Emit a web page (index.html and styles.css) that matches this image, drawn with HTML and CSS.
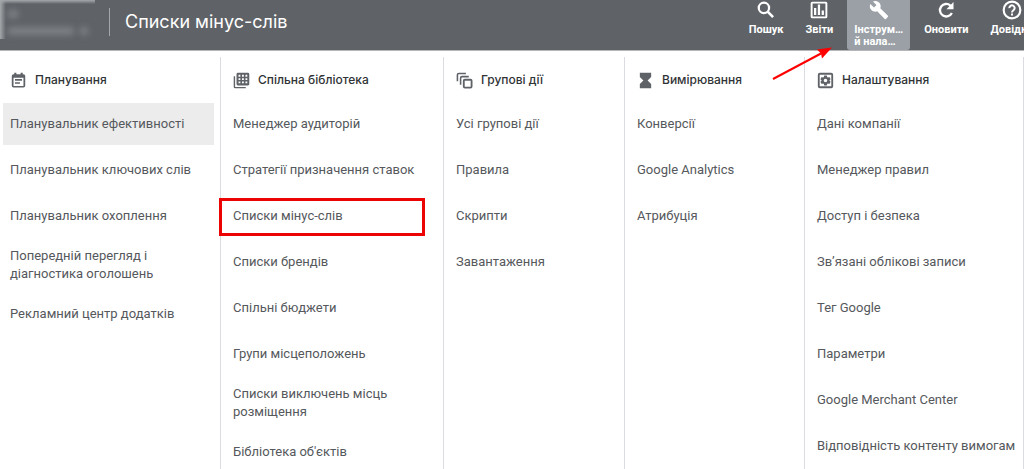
FILE: index.html
```html
<!DOCTYPE html>
<html lang="uk">
<head>
<meta charset="utf-8">
<meta name="viewport" content="width=device-width, initial-scale=1">
<title>Списки мінус-слів</title>
<link rel="stylesheet" href="styles.css">
</head>
<body>
<header class="topbar">
  <div class="account" aria-hidden="true">
    <span class="account-name"></span>
    <span class="account-row"><span class="account-id"></span><span class="account-caret"></span></span>
  </div>
  <h1 class="title">Списки мінус-слів</h1>
  <nav class="tools">
    <button class="tool" type="button">
      <svg class="tool-icon" viewBox="0 0 24 24"><circle cx="9.500" cy="9.500" r="6.200" fill="none" stroke="currentColor" stroke-width="2.700"/><path d="M14 14l6.500 6.500" stroke="currentColor" stroke-width="3.200"/></svg>
      <span class="tool-label">Пошук</span>
    </button>
    <button class="tool" type="button">
      <svg class="tool-icon" viewBox="0 0 24 24"><path d="M4 2h16a2 2 0 0 1 2 2v16a2 2 0 0 1-2 2H4a2 2 0 0 1-2-2V4a2 2 0 0 1 2-2zm.3 2.300v15.400h15.400V4.300zM6 9.500h2.700V18H6zm4.600-4h2.700V18h-2.700zM15.200 12.500h2.700V18h-2.700z"/></svg>
      <span class="tool-label">Звіти</span>
    </button>
    <button class="tool tool-active" type="button" aria-expanded="true">
      <svg class="tool-icon" viewBox="0 0 24 24"><path d="M22.700 19l-9.100-9.100c.9-2.300.4-5-1.500-6.900-2-2-5-2.400-7.400-1.300L9 6 6 9 1.600 4.700C.4 7.100.9 10.100 2.900 12.100c1.900 1.900 4.600 2.400 6.900 1.500l9.100 9.100c.4.4 1 .4 1.400 0l2.300-2.300c.5-.4.5-1.100.1-1.400z"/></svg>
      <span class="tool-label">Інструм…<br>й нала…</span>
    </button>
    <button class="tool" type="button">
      <svg class="tool-icon" viewBox="0 0 24 24"><path d="M19 15.500A7.500 7.500 0 1 1 17.300 6.700L19 8.500" fill="none" stroke="currentColor" stroke-width="2.800"/><path d="M21 2.500v8.500h-8.500z"/></svg>
      <span class="tool-label">Оновити</span>
    </button>
    <button class="tool" type="button">
      <svg class="tool-icon" viewBox="0 0 24 24"><circle cx="12" cy="12" r="10" fill="none" stroke="currentColor" stroke-width="2.600"/><path d="M8.800 9.800a3.200 3.200 0 1 1 5.200 2.300c-1.200 1-2 1.500-2 3" fill="none" stroke="currentColor" stroke-width="2.400"/><path d="M10.800 16.300h2.400v2.400h-2.400z"/></svg>
      <span class="tool-label">Довідка</span>
    </button>
  </nav>
</header>

<main class="menu">
  <section class="column column-first">
    <h2 class="heading">
      <svg class="heading-icon" viewBox="0 0 24 24"><path d="M19 3h-1V1h-3v2H9V1H6v2H5a2.500 2.500 0 0 0-2.500 2.500v14A2.500 2.500 0 0 0 5 22h14a2.500 2.500 0 0 0 2.500-2.500v-14A2.500 2.500 0 0 0 19 3zm0 16.700H5V8h14zM7 10h10v2.300H7zm0 4.300h7v2.300H7z"/></svg>
      Планування
    </h2>
    <ul class="list">
      <li><a class="item item-hover" href="#">Планувальник ефективності</a></li>
      <li><a class="item" href="#">Планувальник ключових слів</a></li>
      <li><a class="item" href="#">Планувальник охоплення</a></li>
      <li><a class="item" href="#">Попередній перегляд і діагностика оголошень</a></li>
      <li><a class="item" href="#">Рекламний центр додатків</a></li>
    </ul>
  </section>

  <section class="column">
    <h2 class="heading">
      <svg class="heading-icon" viewBox="0 0 24 24"><path d="M1 6h2v15h15v2H3a2 2 0 0 1-2-2z"/><path fill-rule="evenodd" d="M7 1h14a2 2 0 0 1 2 2v14a2 2 0 0 1-2 2H7a2 2 0 0 1-2-2V3a2 2 0 0 1 2-2zm.800 3v2.600h2.600V4zm4.900 0v2.600h2.600V4zm4.900 0v2.600h2.600V4zM7.800 8.700v2.600h2.600V8.700zm4.900 0v2.600h2.600V8.700zm4.900 0v2.600h2.600V8.700zM7.800 13.400V16h2.600v-2.600zm4.900 0V16h2.600v-2.600zm4.900 0V16h2.600v-2.600z"/></svg>
      Спільна бібліотека
    </h2>
    <ul class="list">
      <li><a class="item" href="#">Менеджер аудиторій</a></li>
      <li><a class="item" href="#">Стратегії призначення ставок</a></li>
      <li><a class="item item-marked" href="#">Списки мінус-слів</a></li>
      <li><a class="item" href="#">Списки брендів</a></li>
      <li><a class="item" href="#">Спільні бюджети</a></li>
      <li><a class="item" href="#">Групи місцеположень</a></li>
      <li><a class="item" href="#">Списки виключень місць розміщення</a></li>
      <li><a class="item" href="#">Бібліотека об'єктів</a></li>
    </ul>
  </section>

  <section class="column">
    <h2 class="heading">
      <svg class="heading-icon" viewBox="0 0 24 24"><g fill="none" stroke="currentColor" stroke-width="2.200"><path d="M2 13V4a2 2 0 0 1 2-2h10M6.500 18V8.500a2 2 0 0 1 2-2H18"/><rect x="11" y="11" width="11" height="11" rx="1.500" stroke-width="2.600"/></g></svg>
      Групові дії
    </h2>
    <ul class="list">
      <li><a class="item" href="#">Усі групові дії</a></li>
      <li><a class="item" href="#">Правила</a></li>
      <li><a class="item" href="#">Скрипти</a></li>
      <li><a class="item" href="#">Завантаження</a></li>
    </ul>
  </section>

  <section class="column">
    <h2 class="heading">
      <svg class="heading-icon" viewBox="0 0 24 24"><path d="M4 1h16v6l-5 5 5 5v6H4v-6l5-5-5-5z"/></svg>
      Вимірювання
    </h2>
    <ul class="list">
      <li><a class="item" href="#">Конверсії</a></li>
      <li><a class="item" href="#">Google Analytics</a></li>
      <li><a class="item" href="#">Атрибуція</a></li>
    </ul>
  </section>

  <section class="column">
    <h2 class="heading">
      <svg class="heading-icon" viewBox="0 0 24 24"><rect x="2.500" y="2.500" width="19" height="19" rx="1.500" fill="none" stroke="currentColor" stroke-width="2.600"/><path fill-rule="evenodd" d="M10.200 5h3.600l.5 2 1.200.8 2-.6 1.700 3L17.700 11.500v1l1.500 1.300-1.700 3-2-.6-1.200.8-.5 2h-3.600l-.5-2-1.200-.8-2 .6-1.700-3 1.500-1.300v-1L4.800 10.200l1.700-3 2 .6L9.700 7zM12 9.500a2.500 2.500 0 1 0 0 5 2.500 2.500 0 0 0 0-5z"/></svg>
      Налаштування
    </h2>
    <ul class="list">
      <li><a class="item" href="#">Дані компанії</a></li>
      <li><a class="item" href="#">Менеджер правил</a></li>
      <li><a class="item" href="#">Доступ і безпека</a></li>
      <li><a class="item" href="#">Зв’язані облікові записи</a></li>
      <li><a class="item" href="#">Тег Google</a></li>
      <li><a class="item" href="#">Параметри</a></li>
      <li><a class="item" href="#">Google Merchant Center</a></li>
      <li><a class="item" href="#">Відповідність контенту вимогам</a></li>
    </ul>
  </section>
</main>

<svg class="pointer" viewBox="0 0 62 36" aria-hidden="true"><path d="M2 33L50 7.500" fill="none" stroke="#fe0000" stroke-width="2"/><path d="M61 1.500L51 12.500 50 7.500 46 3.500z" fill="#fe0000"/></svg>
</body>
</html>
```

FILE: styles.css
```css
* {
  box-sizing: border-box;
}

body {
  position: relative;
  display: flex;
  flex-direction: column;
  min-height: 100vh;
  margin: 0;
  overflow-x: hidden;
  background: #fff;
  color: #55585c;
  font-family: Roboto, "Liberation Sans", sans-serif;
  font-size: 13px;
  line-height: 18px;
}

.topbar {
  display: flex;
  align-items: flex-start;
  height: 51px;
  overflow: hidden;
  background: #5f6368;
  border-bottom: 1px solid #b4b6b8;
}

.account {
  display: flex;
  flex: none;
  flex-direction: column;
  gap: 9px;
  width: 95px;
  height: 39px;
  padding: 10px 6px 0 8px;
  background:
    linear-gradient(#a5a8ab, #5f636800 4px),
    linear-gradient(90deg, #a5a8ab, #5f636800 6px);
}

.account-name,
.account-id,
.account-caret {
  background: #7d8084;
  filter: blur(3px);
}

.account-name {
  width: 10px;
  height: 8px;
}

.account-row {
  display: flex;
  gap: 6px;
}

.account-id {
  width: 66px;
  height: 8px;
}

.account-caret {
  width: 8px;
  height: 8px;
}

.title {
  margin: 8px 0 0 14px;
  padding-left: 15px;
  border-left: 1px solid #a5a8ab;
  color: #fff;
  font-family: Inter, "Noto Sans", sans-serif;
  font-size: 18px;
  font-weight: 400;
  line-height: 28px;
  white-space: nowrap;
}

.tools {
  display: flex;
  flex: none;
  margin: 0 -20px 0 auto;
}

.tool {
  display: flex;
  flex-direction: column;
  align-items: center;
  height: 50px;
  padding: 0 11px;
  border: 0;
  border-radius: 0 0 3px 3px;
  background: none;
  color: #fff;
  font: 700 11px/12px Roboto, "Liberation Sans", sans-serif;
}

.tool-active {
  padding: 0 7px;
  margin: 0 3px;
  background: #9aa0a6;
  text-align: left;
}

.tool-icon {
  width: 20px;
  height: 20px;
  margin-bottom: 4px;
  fill: currentColor;
}

.menu {
  display: grid;
  flex: 1;
  grid-template-columns: 221fr 223fr 181fr 180fr 219fr;
  padding-top: 6px;
}

.column {
  padding: 12px 0 0 5px;
  border-right: 1px solid #dadce0;
}

.column-first {
  padding-right: 6px;
  padding-left: 3px;
}

.heading {
  display: flex;
  gap: 8px;
  align-items: center;
  height: 22px;
  margin: 0 0 12px 7px;
  color: #303336;
  font-family: Inter, "Noto Sans", sans-serif;
  font-size: 12px;
  font-weight: 500;
}

.heading-icon {
  width: 17px;
  height: 17px;
  fill: #5f6368;
  color: #5f6368;
}

.list {
  display: flex;
  flex-direction: column;
  gap: 4px;
  margin: 0;
  padding: 0;
  list-style: none;
}

.item {
  position: relative;
  display: flex;
  align-items: center;
  min-height: 42px;
  padding: 6px 4px 6px 7px;
  color: inherit;
  text-decoration: none;
}

.item-hover {
  background: #ececec;
}

.item-marked::after {
  position: absolute;
  inset: 3px 18px 1px -7px;
  border: 3px solid #ec0404;
  content: "";
}

.pointer {
  position: absolute;
  top: 46px;
  left: 771px;
  width: 62px;
}
```
